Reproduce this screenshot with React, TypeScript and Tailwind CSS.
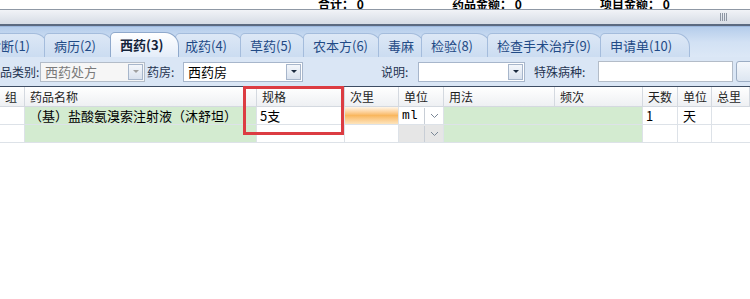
import React from "react";

const tabs = [
  { label: "诊断(1)", w: 70 },
  { label: "病历(2)", w: 70 },
  { label: "西药(3)", w: 69, active: true },
  { label: "成药(4)", w: 69 },
  { label: "草药(5)", w: 67 },
  { label: "农本方(6)", w: 79 },
  { label: "毒麻", w: 47 },
  { label: "检验(8)", w: 70 },
  { label: "检查手术治疗(9)", w: 117 },
  { label: "申请单(10)", w: 90 },
];

const cols = [
  { title: "组", w: 25 },
  { title: "药品名称", w: 232 },
  { title: "规格", w: 88 },
  { title: "次里", w: 54 },
  { title: "单位", w: 45 },
  { title: "用法", w: 111 },
  { title: "频次", w: 88 },
  { title: "天数", w: 35 },
  { title: "单位", w: 34 },
  { title: "总里", w: 38 },
];

function Arrow({ disabled }: { disabled?: boolean }) {
  return (
    <div className="w-[15px] h-[16px] border border-[#a7b6cb] bg-gradient-to-b from-[#f4f7fb] to-[#d9e2ee] flex items-center justify-center shrink-0">
      <div
        className={`w-0 h-0 border-l-[3px] border-r-[3px] border-t-[3px] border-l-transparent border-r-transparent ${
          disabled ? "border-t-[#a0a0a0]" : "border-t-[#1b2a3f]"
        }`}
      />
    </div>
  );
}

function Chevron() {
  return (
    <div className="w-[19px] h-[16px] border-l border-[#c8ced6] flex items-center justify-center shrink-0">
      <svg width="9" height="6" viewBox="0 0 9 6">
        <path d="M1 1 L4.5 4.5 L8 1" fill="none" stroke="#7a8796" strokeWidth="1" />
      </svg>
    </div>
  );
}

export default function App() {
  return (
    <div className="relative w-[750px] h-[299px] overflow-hidden bg-white text-[12px] text-[#1e1e1e] font-['Noto_Sans_CJK_SC',sans-serif]">
      {/* totals */}
      <div className="h-[9px] overflow-hidden flex items-end font-bold text-[12px] text-black whitespace-nowrap">
        <div className="flex leading-[12px] mb-[-1px]">
          <span className="ml-[318px] w-[134px]">合计：&nbsp;0</span>
          <span className="w-[148px]">药品金额：&nbsp;0</span>
          <span>项目金额：&nbsp;0</span>
        </div>
      </div>

      {/* splitter bar */}
      <div className="h-[17px] border-t border-[#8f98a5] border-b-2 border-b-[#5b6a80] bg-gradient-to-b from-[#f1f3f7] to-[#d6dce5] flex items-center">
        <div className="ml-[720px] flex gap-[1px]">
          <div className="w-[1px] h-[8px] bg-[#8d96a3]" />
          <div className="w-[1px] h-[8px] bg-[#8d96a3]" />
          <div className="w-[1px] h-[8px] bg-[#8d96a3]" />
          <div className="w-[1px] h-[8px] bg-[#8d96a3]" />
        </div>
      </div>

      {/* tab strip */}
      <div className="h-[31px] bg-gradient-to-b from-[#b5cdeb] via-[#d2e1f4] to-[#dce8f6] border-t border-[#9db8de] flex items-end whitespace-nowrap">
        <div className="flex items-end ml-[-22px]">
          {tabs.map((t) => (
            <div
              key={t.label}
              style={{ width: t.w }}
              className={`shrink-0 h-[24px] mr-[-4px] flex items-center pl-[9px] rounded-tl-[5px] rounded-tr-[14px] border border-b-0 text-[13px] ${
                t.active
                  ? "relative z-10 h-[25px] bg-gradient-to-b from-white to-[#e4edf9] border-[#8fa9cc] font-bold text-[#15243a] pl-[7px]"
                  : "bg-gradient-to-b from-[#dde8f6] to-[#cbdcf1] border-[#a4bcdc] text-[#1f4a86]"
              }`}
            >
              {t.label}
            </div>
          ))}
        </div>
      </div>

      {/* toolbar */}
      <div className="h-[29px] bg-[#dae6f5] flex items-center text-[12px] text-[#1f3350] whitespace-nowrap">
        <span className="ml-[-12px] w-[52px] shrink-0">药品类别:</span>
        <div className="shrink-0 w-[105px] h-[20px] border border-[#b3bcc8] bg-[#f6f6f6] flex items-center justify-between pl-[4px] pr-[1px] text-[13px]">
          <span className="text-[#7a7a7a]">西药处方</span>
          <Arrow disabled />
        </div>
        <span className="shrink-0 ml-[2px] w-[36px]">药房:</span>
        <div className="shrink-0 w-[120px] h-[20px] border border-[#a7b6cb] bg-white flex items-center justify-between pl-[4px] pr-[1px] text-[13px]">
          <span className="text-black">西药房</span>
          <Arrow />
        </div>
        <span className="shrink-0 ml-[78px] w-[37px]">说明:</span>
        <div className="shrink-0 w-[107px] h-[20px] border border-[#a7b6cb] bg-white flex items-center justify-end pr-[1px]">
          <Arrow />
        </div>
        <span className="shrink-0 ml-[9px] w-[64px]">特殊病种:</span>
        <div className="shrink-0 w-[135px] h-[21px] border border-[#b3bcc8] bg-white" />
        <div className="shrink-0 ml-[3px] w-[30px] h-[21px] border border-[#9cadc4] rounded-[3px] bg-gradient-to-b from-[#f5f8fc] to-[#dde6f1]" />
      </div>

      {/* grid */}
      <div className="border-t border-[#3e4d63] whitespace-nowrap">
        <div className="flex h-[20px] bg-gradient-to-b from-white to-[#eef0f3] border-b border-[#d4d9e0] text-[12px] text-[#1e1e1e]">
          {cols.map((c, i) => (
            <div
              key={i}
              style={{ width: c.w }}
              className="border-r border-[#d4d9e0] flex items-center pl-[5px] shrink-0"
            >
              {c.title}
            </div>
          ))}
        </div>

        {/* row 1 */}
        <div className="flex h-[18px] border-b border-[#dde2e8] text-[13px] text-black">
          <div className="w-[25px] shrink-0 border-r border-[#dde2e8]" />
          <div className="w-[232px] shrink-0 bg-[#d3ebd0] border-r border-[#dde2e8] flex items-center pl-[4px]">
            （基）盐酸氨溴索注射液（沐舒坦）
          </div>
          <div className="w-[88px] shrink-0 border-r border-[#dde2e8] flex items-center pl-[3px]">5支</div>
          <div className="w-[54px] shrink-0 border-r border-[#dde2e8] bg-gradient-to-b from-[#fff6e8] via-[#f9b75e] to-[#fde4bc]" />
          <div className="w-[45px] shrink-0 border-r border-[#dde2e8] flex items-center justify-between bg-white">
            <span className="pl-[3px] font-['Liberation_Mono',monospace] text-[13px]">ml</span>
            <Chevron />
          </div>
          <div className="w-[111px] shrink-0 bg-[#d3ebd0] border-r border-[#d3ebd0]" />
          <div className="w-[88px] shrink-0 bg-[#d3ebd0] border-r border-[#dde2e8]" />
          <div className="w-[35px] shrink-0 border-r border-[#dde2e8] flex items-center pl-[3px]">1</div>
          <div className="w-[34px] shrink-0 border-r border-[#dde2e8] flex items-center pl-[5px]">天</div>
          <div className="w-[38px] shrink-0" />
        </div>

        {/* row 2 */}
        <div className="flex h-[18px] border-b border-[#dde2e8]">
          <div className="w-[25px] shrink-0 border-r border-[#dde2e8]" />
          <div className="w-[232px] shrink-0 bg-[#d3ebd0] border-r border-[#dde2e8]" />
          <div className="w-[88px] shrink-0 border-r border-[#dde2e8]" />
          <div className="w-[54px] shrink-0 border-r border-[#dde2e8]" />
          <div className="w-[45px] shrink-0 border-r border-[#dde2e8] flex items-center justify-end bg-[#e6e6e6]">
            <Chevron />
          </div>
          <div className="w-[111px] shrink-0 bg-[#d3ebd0] border-r border-[#d3ebd0]" />
          <div className="w-[88px] shrink-0 bg-[#d3ebd0] border-r border-[#dde2e8]" />
          <div className="w-[35px] shrink-0 border-r border-[#dde2e8]" />
          <div className="w-[34px] shrink-0 border-r border-[#dde2e8]" />
          <div className="w-[38px] shrink-0" />
        </div>
      </div>

      {/* annotation box */}
      <div className="absolute left-[243px] top-[86px] w-[101px] h-[49px] border-[3px] border-[#dc3c42]" />
    </div>
  );
}
